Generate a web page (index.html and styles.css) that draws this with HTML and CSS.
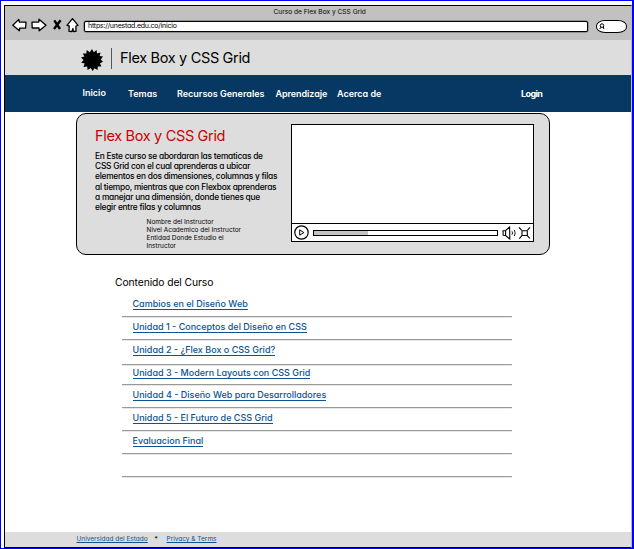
FILE: index.html
```
<!DOCTYPE html>
<html lang="es">
<head>
<meta charset="utf-8">
<title>Curso de Flex Box y CSS Grid</title>
<link rel="stylesheet" href="styles.css">
</head>
<body>
<div class="window">
  <div class="chrome">
    <div class="window-title">Curso de Flex Box y CSS Grid</div>
    <div class="toolbar">
      <svg class="tools" width="68" height="18" viewBox="0 0 68 18" fill="#fff" stroke="#000" stroke-width="1.3" stroke-linejoin="round">
        <path d="M.8 9.2 6.8 3.4 7.3 6 14 6.2 13.6 12 7.6 12.2 7.4 14.8Z"/>
        <path d="M20 6.2 26.8 6 27 3.2 34 9.2 27.2 14.8 27 12 20.2 12Z"/>
        <path d="M42.3 4.3 48 13M48.6 4.2 42 13" stroke-width="2.4" fill="none"/>
        <path d="M55 9.4 60.5 2.7 66 9.4 63.9 10 64 15.3 61.3 15.5 61 12.5 59.8 15.5 57 15.3 57.2 10Z"/>
      </svg>
      <div class="address">https://unestad.edu.co/inicio</div>
      <div class="search">
        <svg width="6" height="7" viewBox="0 0 6 7" fill="none" stroke="#000" stroke-width="1"><circle cx="3" cy="2.6" r="1.8"/><path d="M1.8 4.2.8 6M4.3 4l.6 2"/></svg>
      </div>
    </div>
  </div>
  <header class="site-header">
    <svg class="logo" width="22" height="22" viewBox="0 0 22 22"><path d="M11 0 12.8 3.3 15.6 1 16 4.6 19.6 3.6 18.6 7 22 7.4 19.8 10.4 22 12.8 19 14.2 20.4 17.6 16.8 17.6 16.6 21 13.5 19.2 11.6 22 9.8 19 6.6 21 6.2 17.6 2.4 18 3.7 14.6.2 13.8 2.6 11 0 8.6 3.4 7.6 1.8 4.4 5.4 4.6 5.6 1 8.8 3.2Z"/></svg>
    <span class="bar"></span>
    <div class="site-name">Flex Box y CSS Grid</div>
  </header>
  <nav class="menu">
    <a class="inicio">Inicio</a><a class="temas">Temas</a><a class="recursos">Recursos Generales</a><a class="aprendizaje">Aprendizaje</a><a class="acerca">Acerca de</a><a class="login">Login</a>
  </nav>
  <main>
    <section class="hero">
      <div class="intro">
        <h1>Flex Box y CSS Grid</h1>
        <p class="summary">En Este curso se abordaran las tematicas de<br>CSS Grid con el cual aprenderas a ubicar<br>elementos en dos dimensiones, columnas y filas<br>al tiempo, mientras que con Flexbox aprenderas<br>a manejar una dimensión, donde tienes que<br>elegir entre filas y columnas</p>
        <p class="teacher">Nombre del Instructor<br>Nivel Academico del Instructor<br>Entidad Donde Estudio el<br>Instructor</p>
      </div>
      <div class="video">
        <div class="screen"></div>
        <div class="controls">
          <svg width="15" height="15" viewBox="0 0 15 15" fill="none" stroke="#000"><circle cx="7.5" cy="7.5" r="6.7" stroke-width="1.2"/><path d="M5.7 4.8v5.4L9.8 7.6Z"/></svg>
          <div class="track"><div class="played"></div></div>
          <svg class="end-icons" width="29" height="14" viewBox="0 0 29 14" fill="none" stroke="#000"><path d="M1 4.8 3.6 4.5 7.6 1 7.8 13 3.6 9.5 1.2 9.3ZM3.6 4.5v5" stroke-width="1.1"/><path d="M10 5.3q1 1.7 0 3.4M12.3 4q1.7 3 0 6" stroke-width=".9"/><path d="M20 4.8h5.3v4.7H20ZM17 1.5l2.6 2.7M28 1.3l-2.5 2.9M17.3 12.7l2.4-2.8M28 12.5l-2.5-2.7" stroke-width="1.1"/></svg>
        </div>
      </div>
    </section>
    <section class="contents">
      <h2>Contenido del Curso</h2>
      <ul>
        <li class="l1"><a>Cambios en el Diseño Web</a></li>
        <li class="l2"><a>Unidad 1 - Conceptos del Diseño en CSS</a></li>
        <li class="l3"><a>Unidad 2 - ¿Flex Box o CSS Grid?</a></li>
        <li class="l4"><a>Unidad 3 - Modern Layouts con CSS Grid</a></li>
        <li class="l5"><a>Unidad 4 - Diseño Web para Desarrolladores</a></li>
        <li class="l6"><a>Unidad 5 - El Futuro de CSS Grid</a></li>
        <li class="l7"><a>Evaluacion Final</a></li>
        <li class="l8"></li>
      </ul>
    </section>
  </main>
  <footer><a class="state">Universidad del Estado</a><span class="dot">*</span><a class="privacy">Privacy &amp; Terms</a></footer>
</div>
</body>
</html>
```

FILE: styles.css
```
* { box-sizing: border-box; margin: 0; padding: 0; }
body {
  width: 634px;
  height: 549px;
  overflow: hidden;
  background: #fff;
  border: 1px solid #00f;
  border-right-width: 2px;
  padding: 4px 0 0 3px;
  font-family: Inter, "Liberation Sans", sans-serif;
  font-feature-settings: "cv11" 1;
  color: #000;
  white-space: nowrap;
}
.window {
  height: 543px;
  border: 1px solid #000;
  border-right: 1px solid #bbb;
  display: flex;
  flex-direction: column;
}
.chrome { height: 34px; background: #c1c1c1; flex: none; }
.window-title { height: 10px; line-height: 12px; font-size: 6.6px; padding-left: 268.5px; }
.toolbar { display: flex; height: 20px; align-items: center; }
.tools { margin: -3px 0 0 7px; }
.address {
  width: 504px;
  height: 11px;
  margin: 1px 0 0 4px;
  padding-left: 3px;
  background: #fff;
  border: 1px solid #000;
  border-radius: 2px;
  box-shadow: 0 0 0 .5px rgba(0, 0, 0, .5);
  font-size: 7px;
  line-height: 8px;
  letter-spacing: -.22px;
}
.search {
  display: flex;
  align-items: center;
  width: 31px;
  height: 13px;
  margin-left: 8px;
  padding-left: 2px;
  background: #fff;
  border: 1px solid #000;
  border-radius: 9px / 6px;
}
.site-header { display: flex; align-items: flex-start; height: 35px; flex: none; background: #ddd; padding-left: 76px; }
.logo { margin-top: 9px; }
.bar { width: 1px; height: 21px; margin: 8px 0 0 8px; background: #555; }
.site-name { margin: 8px 0 0 8px; font-size: 14.5px; line-height: 20px; letter-spacing: -.33px; }
.menu { display: flex; height: 37px; flex: none; background: #073763; color: #fff; font-size: 9px; line-height: 12px; font-weight: 600; padding: 13px 0 0 77.5px; }
.menu a { flex: none; }
.inicio { width: 45.5px; margin-top: -1px; }
.temas { width: 49px; }
.recursos { width: 98.5px; }
.aprendizaje { width: 61.5px; letter-spacing: -.08px; }
.acerca { width: 184px; }
.login { letter-spacing: -.6px; font-weight: 700; }
main { flex: 1; min-height: 0; }
.hero {
  display: flex;
  width: 474px;
  height: 142px;
  margin: 1px 0 0 71px;
  background: #ddd;
  border: 1px solid #000;
  border-radius: 10px;
}
.intro { width: 215px; padding: 12px 0 0 18px; flex: none; }
h1 { font-size: 14.5px; line-height: 20px; font-weight: 400; color: #cc0000; letter-spacing: -.33px; }
.summary { margin-top: 5px; font-size: 8.4px; line-height: 10.2px; letter-spacing: -.26px; font-weight: 450; }
.teacher { margin: 6px 0 0 51.5px; font-size: 6.5px; line-height: 8px; }
.video { width: 243px; height: 118px; margin: 10px 0 0 -1px; border: 1px solid #000; background: #fff; flex: none; }
.screen { height: 98px; }
.controls { display: flex; align-items: center; height: 18px; border-top: 1px solid #000; padding-left: 2px; }
.track { width: 185px; height: 6px; margin-left: 4px; border: 1px solid #000; }
.played { width: 54px; height: 100%; background: #c4c4c4; }
.end-icons { margin-left: 4px; }
.contents { padding: 20px 0 0 110px; }
h2 { font-size: 10.3px; line-height: 14px; font-weight: 400; letter-spacing: -.08px; }
ul { list-style: none; width: 390px; margin: 7px 0 0 7px; }
li { height: 23px; padding-left: 10.5px; border-bottom: 1px solid #999; box-shadow: 0 1px 0 -.3px #ddd; font-size: 9px; line-height: 12px; }
li a { display: inline-block; height: 11px; border-bottom: 1px solid #0b5394; color: #0b5394; margin-top: 5px; line-height: 10px; font-weight: 500; }
.l1 { height: 21px; }
.l1 a { margin-top: 3px; }
.l3 { height: 25px; }
.l4 { height: 20px; }
.l4 a { margin-top: 3px; }
footer { display: flex; height: 15px; flex: none; background: #ddd; padding: 2px 0 0 71.5px; font-size: 6.5px; line-height: 11px; }
footer a { color: #0b5394; text-decoration: underline; }
.state { width: 78px; }
.dot { width: 12px; }
```
